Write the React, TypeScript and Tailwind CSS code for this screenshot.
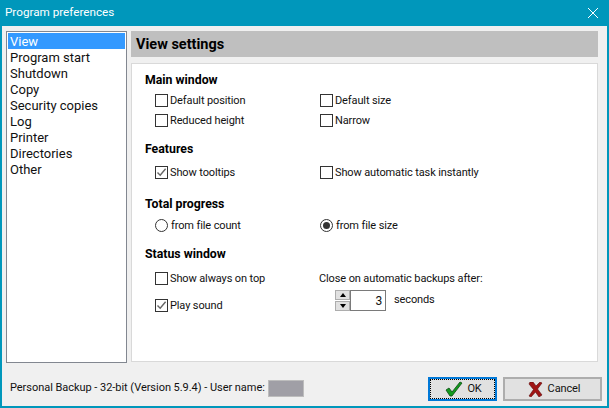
import React from "react";

const pages = ["View", "Program start", "Shutdown", "Copy", "Security copies", "Log", "Printer", "Directories", "Other"];

const Check: React.FC<{ label: string; checked?: boolean }> = ({ label, checked }) => (
  <div className="flex items-center h-[13px]">
    <div className="w-[13px] h-[13px] border border-[#333333] bg-white flex items-center justify-center shrink-0">
      {checked && (
        <svg width="11" height="11" viewBox="0 0 11 11" fill="none">
          <path d="M1.5 5.5 L4.2 8.3 L9.6 1.8" stroke="#666666" strokeWidth="1.4" />
        </svg>
      )}
    </div>
    <span className="ml-[2px] pt-[2px] whitespace-nowrap">{label}</span>
  </div>
);

const Radio: React.FC<{ label: string; checked?: boolean }> = ({ label, checked }) => (
  <div className="flex items-center h-[13px]">
    <div className="w-[13px] h-[13px] rounded-full border border-[#333333] bg-white flex items-center justify-center shrink-0">
      {checked && <div className="w-[7px] h-[7px] rounded-full bg-[#333333]" />}
    </div>
    <span className="ml-[3px] pt-[2px] whitespace-nowrap">{label}</span>
  </div>
);

const Heading: React.FC<{ children: React.ReactNode }> = ({ children }) => (
  <div className="font-bold h-[14px] leading-[14px] text-[12.3px] tracking-normal text-black">{children}</div>
);

const Arrow: React.FC<{ up?: boolean }> = ({ up }) => (
  <div className="w-[15px] h-[10px] bg-[#e1e1e1] border border-[#adadad] flex items-center justify-center">
    <div
      className={
        up
          ? "w-0 h-0 border-x-[3px] border-x-transparent border-b-[4px] border-b-black"
          : "w-0 h-0 border-x-[3px] border-x-transparent border-t-[4px] border-t-black"
      }
    />
  </div>
);

export default function App() {
  return (
    <div className="w-[609px] h-[408px] flex flex-col bg-[#f0f0f0] border-x-2 border-b-2 border-[#0097bb] text-[11px] tracking-[-0.12px] text-[#111111] font-['Roboto','Liberation_Sans',sans-serif] overflow-hidden">
      {/* title bar */}
      <div className="h-[26px] shrink-0 -mx-[2px] bg-[#0097bb] flex items-center justify-between pl-[5px] pr-[10px] text-white text-[11.7px] tracking-normal">
        <span>Program preferences</span>
        <svg width="12" height="12" viewBox="0 0 12 12" fill="none">
          <path d="M1 1 L11 11 M11 1 L1 11" stroke="white" strokeWidth="1" />
        </svg>
      </div>

      <div className="flex-1 flex pt-[5px] pl-[4px] pr-[9px] gap-[4px] min-h-0">
        {/* page list */}
        <div className="w-[121px] h-[332px] shrink-0 bg-white border border-[#828790] p-[1px] text-[13px] tracking-normal">
          {pages.map((p, i) => (
            <div
              key={p}
              className={
                i === 0
                  ? "h-[16px] leading-[18px] pl-[2px] bg-[#3399ff] text-white"
                  : "h-[16px] leading-[18px] pl-[2px]"
              }
            >
              {p}
            </div>
          ))}
        </div>

        <div className="flex-1 flex flex-col">
          <div className="h-[26px] pt-[2px] bg-[#bfbfbf] flex items-center pl-[5px] font-bold text-[14.5px] tracking-normal text-black">
            View settings
          </div>

          <div className="mt-[6px] h-[299px] bg-white border border-[#d9d9d9] pl-[13px] pt-[9px]">
            <Heading>Main window</Heading>
            <div className="mt-[7px] ml-[10px] grid grid-cols-[165px_1fr] gap-y-[7px]">
              <Check label="Default position" />
              <Check label="Default size" />
              <Check label="Reduced height" />
              <Check label="Narrow" />
            </div>

            <div className="mt-[15px]">
              <Heading>Features</Heading>
            </div>
            <div className="mt-[10px] ml-[10px] grid grid-cols-[165px_1fr]">
              <Check label="Show tooltips" checked />
              <Check label="Show automatic task instantly" />
            </div>

            <div className="mt-[18px]">
              <Heading>Total progress</Heading>
            </div>
            <div className="mt-[8px] ml-[10px] grid grid-cols-[165px_1fr]">
              <Radio label="from file count" />
              <Radio label="from file size" checked />
            </div>

            <div className="mt-[15px]">
              <Heading>Status window</Heading>
            </div>
            <div className="mt-[11px] ml-[10px] grid grid-cols-[165px_1fr]">
              <div className="flex flex-col gap-[14px]">
                <Check label="Show always on top" />
                <Check label="Play sound" checked />
              </div>
              <div>
                <div className="h-[13px] leading-[13px] whitespace-nowrap -ml-[1px]">Close on automatic backups after:</div>
                <div className="mt-[5px] ml-[15px] flex items-center">
                  <div className="flex flex-col gap-[1px]">
                    <Arrow up />
                    <Arrow />
                  </div>
                  <div className="w-[36px] h-[21px] border border-[#7a7a7a] bg-white flex items-center justify-end pr-[3px] text-[12px]">
                    3
                  </div>
                  <span className="ml-[8px] -mt-[1px]">seconds</span>
                </div>
              </div>
            </div>
          </div>
        </div>
      </div>

      {/* footer */}
      <div className="h-[38px] shrink-0 flex items-start pl-[8px] pr-[5px]">
        <div className="flex items-center h-[17px] mt-[12px] whitespace-nowrap tracking-[-0.04px]">
          <span>Personal Backup - 32-bit (Version 5.9.4) - User name:</span>
          <div className="ml-[3px] w-[36px] h-[17px] bg-[#a09fa6] border border-[#bdbdbd]" />
        </div>
        <div className="ml-auto flex gap-[6px] mt-[9px]">
          <button className="w-[69px] h-[24px] pl-[2px] bg-[#e1e1e1] border-2 border-[#0078d7] flex items-center justify-center gap-[4px] outline-1 outline-dotted outline-black -outline-offset-3">
            <svg width="18" height="16" viewBox="0 0 18 16">
              <path d="M1 9 L4 7 L7 11 L15 1 L17 2 L7 15 L5 15 Z" fill="#119a1c" stroke="#0a4a12" strokeWidth="0.8" />
            </svg>
            <span>OK</span>
          </button>
          <button className="w-[99px] h-[24px] pl-[3px] bg-[#e1e1e1] border-2 border-[#adadad] flex items-center justify-center gap-[5px]">
            <svg width="15" height="15" viewBox="0 0 15 15">
              <path d="M2 0 L5 0 L8 4 L12 0 L14 1 L9.5 7 L14 13 L11 15 L7.5 10 L3 15 L1 14 L5.5 7.5 L1 2 Z" fill="#a01414" stroke="#5c0a0a" strokeWidth="0.6" />
            </svg>
            <span>Cancel</span>
          </button>
        </div>
      </div>
    </div>
  );
}
